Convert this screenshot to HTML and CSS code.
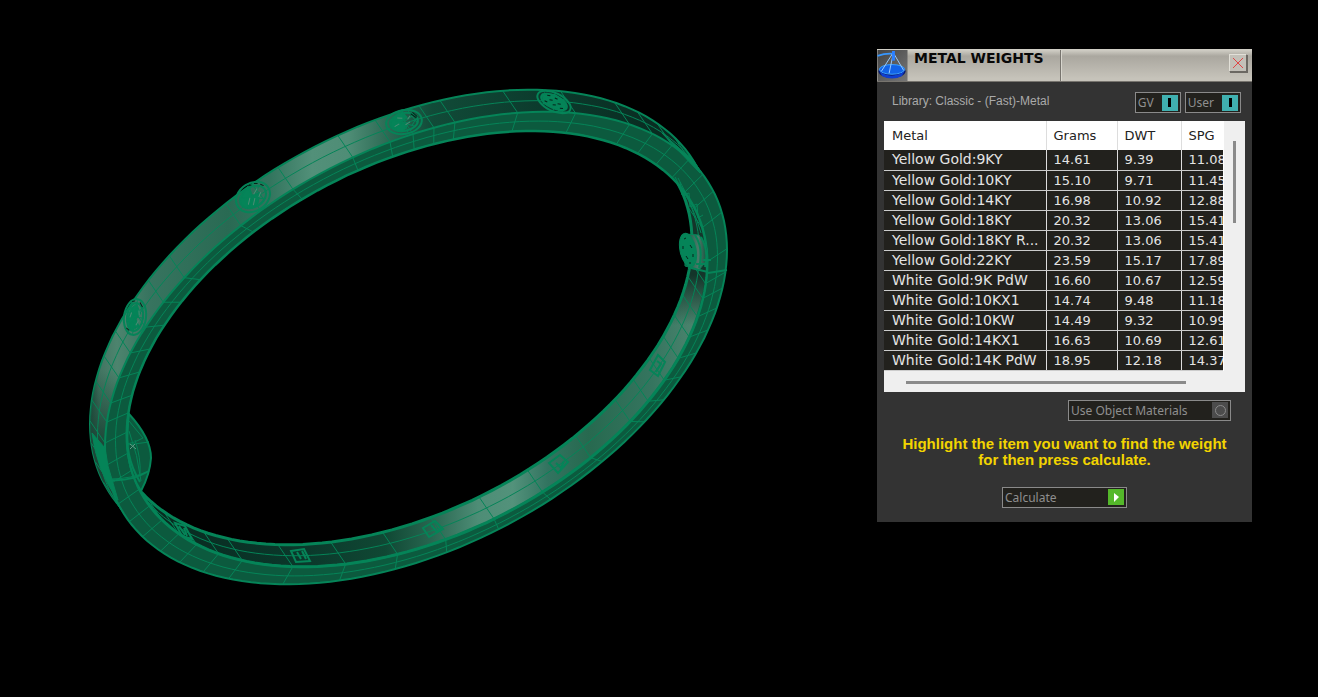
FILE: index.html
```html
<!DOCTYPE html>
<html lang="en">
<head>
<meta charset="utf-8">
<title>Metal Weights</title>
<link rel="stylesheet" href="styles.css">
</head>
<body>
<main class="workspace">
  <svg class="viewport" viewBox="0 0 1318 697" role="img" aria-label="Wireframe bangle">
    <defs>
      <linearGradient id="outer-shade" gradientUnits="userSpaceOnUse" x1="90" y1="0" x2="690" y2="0">
        <stop offset="0" stop-color="#1f4a3b"/>
        <stop offset=".015" stop-color="#427461"/>
        <stop offset=".045" stop-color="#4d846e"/>
        <stop offset=".1" stop-color="#37745f"/>
        <stop offset=".23" stop-color="#296a53"/>
        <stop offset=".3" stop-color="#33755e"/>
        <stop offset=".37" stop-color="#529079"/>
        <stop offset=".43" stop-color="#4f8d76"/>
        <stop offset=".5" stop-color="#2a6852"/>
        <stop offset=".57" stop-color="#114b38"/>
        <stop offset=".75" stop-color="#0c3b2d"/>
        <stop offset="1" stop-color="#08281e"/>
      </linearGradient>
      <linearGradient id="outer-fade" gradientUnits="userSpaceOnUse" x1="0" y1="370" x2="0" y2="445">
        <stop offset="0" stop-color="#1c4637" stop-opacity="0"/>
        <stop offset="1" stop-color="#1c4637"/>
      </linearGradient>
      <linearGradient id="inner-shade" gradientUnits="userSpaceOnUse" x1="130" y1="0" x2="710" y2="0">
        <stop offset="0" stop-color="#08281e"/>
        <stop offset=".3" stop-color="#0b382b"/>
        <stop offset=".44" stop-color="#104834"/>
        <stop offset=".52" stop-color="#286650"/>
        <stop offset=".6" stop-color="#4e8d76"/>
        <stop offset=".66" stop-color="#53927b"/>
        <stop offset=".72" stop-color="#327460"/>
        <stop offset=".79" stop-color="#27694f"/>
        <stop offset=".9" stop-color="#35755f"/>
        <stop offset=".97" stop-color="#4a836d"/>
        <stop offset="1" stop-color="#4a836d"/>
      </linearGradient>
      <linearGradient id="inner-fade" gradientUnits="userSpaceOnUse" x1="0" y1="275" x2="0" y2="325">
        <stop offset="0" stop-color="#14352a"/>
        <stop offset="1" stop-color="#14352a" stop-opacity="0"/>
      </linearGradient>
      <linearGradient id="barrel" x1="0" y1="0" x2="1" y2="0">
        <stop offset="0" stop-color="#0c5a40"/>
        <stop offset=".6" stop-color="#4b7a69"/>
        <stop offset="1" stop-color="#15523d"/>
      </linearGradient>
      <clipPath id="hole"><path id="hole-path"/></clipPath>
    </defs>

    <g class="mesh" id="bangle"></g>

    <g class="mesh hinge">
      <path class="face" d="M129 414Q151 438 151 458Q150 474 141 491Q122 462 129 414Z"/>
      <path d="M129 421l14 17M129 431q9 24 12 50M143 438q-9 5-16 6M149 471q-18 8-38 8M127 445l22-3M135 440q6 18 5 34"/>
      <path class="rim" d="M128 424q-4 32 12 58M110 480q20 2 39-9"/>
      <path class="solid" d="M92 433L105 448 108 466 118 500Q97 472 92 433Z"/>
      <path class="spark" d="M130 444l6 5M135 444l-5 5"/>
    </g>

    <g class="mesh">
      <path class="solid" d="M662 133L676 148 700 173 694 161Z"/>
      <path class="rim" d="M708 273l19-3"/>
      <path class="barrel" d="M685 234l14 1 8 13v12l-8 10-14-4z"/>
      <ellipse class="solid" cx="688" cy="250" rx="8" ry="17" transform="rotate(-12 688 250)"/>
      <path class="pit" d="M684 239l2-1M683 246v3M690 245l2 3M686 256l2 3M693 254v3M689 263h2"/>
      <path class="rim" d="M695 235q9 14 4 33M701 237q8 14 4 30M691 268l17 4M703 260h8M696 264h12"/>
      <path d="M675 177q15 25 17 56M678 178q14 25 23 55M680 182l2 13 7-2 1 14 7-3 1 14 5-3"/>
    </g>

    <g class="mesh">
      <g transform="translate(404 122) rotate(-10)"><g class="gem">
        <ellipse rx="18" ry="12"/><ellipse rx="14" ry="9"/>
        <path class="fill" d="M-14 0Q-10-9 0-10L4-4-3 0 3 4-2 9Q-12 8-14 0Z"/>
        <path d="M-12-5L10 6M-10 5L12-6M0-11L2 11M6-10L13 3M7 5l8-9"/>
        <path class="glint" d="M-10 3l5-2M-6-5l5 1M1 3l5-2M7-5l-3 3"/><path class="pit" d="M8-7l5 5M10-8l4 5"/></g></g>
      <g transform="translate(253 197) rotate(-32)"><g class="gem">
        <ellipse rx="18" ry="14"/><ellipse rx="14" ry="10"/>
        <path class="fill" d="M-14 0Q-8-11 2-9L0-2 8 0 0 9Q-12 10-14 0Z"/>
        <path d="M-12-6L10 8M-10 7L12-7M1-12L-1 13M6-10L8 8"/>
        <path class="glint" d="M-8 4l5-5M-4 7l5-5M2-2l6-3M5 3l4-3"/><path class="pit" d="M2-12l3 1M8-11l3 2M13-7l2 3"/></g></g>
      <g transform="translate(135 317) rotate(8)"><g class="gem">
        <ellipse rx="11" ry="18"/><ellipse rx="8" ry="14"/>
        <path class="fill" d="M0-13L5-4 1 2 5 9-2 14Q-9 4-5-8Z"/>
        <path d="M-6-9L6 10M6-11L-5 11M0-17V17M-8 0H9"/>
        <path class="glint" d="M-5 1l1-5M3-7l1 5M4 3l-2 5"/><path class="pit" d="M-5-15l3-1M3-15l3 4M-4 14l-3-2"/></g></g>
      <g transform="translate(554 102) rotate(26)"><g class="gem">
        <ellipse rx="18" ry="9"/><ellipse rx="14" ry="6"/>
        <path class="fill" d="M-14-2L-2-7 8-6 14 0 9 5-9 6Z"/>
        <path d="M-13-4L12 5M-10 4L10-6M-3-8L3 8M8-7v14"/>
        <path class="pit" d="M-9-3l3-1M-5 0l3-1M-1-4l3 0M0 3l3-1M4 0l3-1M8 3l3-1M-9 3l3 0"/></g></g>
    </g>

    <g class="mesh stamp">
      <path d="M658 355l7 7-7 14-8-6zM657 361l4 3-5 8"/>
      <path d="M549 463l11-8 8 7-10 11zM556 463l5 5 3-7"/>
      <path d="M423 528l12-7 8 8-14 8zM431 525l6 7 5-4"/>
      <path d="M291 551l13-2 6 12-14 1zM297 552l4 7M302 551l4 8"/>
      <path d="M175 523l10 3 7 13-10-3zM179 526l6 9M184 528l3 8"/>
    </g>
  </svg>

  <section class="panel" aria-labelledby="panel-title">
    <header class="titlebar">
      <svg class="logo" viewBox="0 0 31 32" aria-hidden="true">
        <defs><linearGradient id="logo-bg" x1="0" y1="0" x2="1" y2="1"><stop stop-color="#444"/><stop offset="1" stop-color="#777"/></linearGradient></defs>
        <rect width="31" height="32" fill="url(#logo-bg)"/>
        <ellipse cx="15" cy="22" rx="14" ry="7" fill="#081c70"/>
        <ellipse cx="15" cy="20" rx="13" ry="5" fill="#1263e8" stroke="#3fa4ff"/>
        <path d="M2 22q12 9 26 0l-3 5q-10 5-20 0z" fill="#0f3fd0"/>
        <path d="M0 6Q9 3 17 4" fill="none" stroke="#3797ff" stroke-width="2"/>
        <path d="M16 3L4 22M17 4l10 17M16 5l-4 19" fill="none" stroke="#9acbff"/>
        <path d="M15 1h3v10h-3z" fill="#2c80ff"/>
      </svg>
      <h1 class="title" id="panel-title">METAL WEIGHTS</h1>
      <button class="close" type="button" aria-label="Close">
        <svg viewBox="0 0 12 12" aria-hidden="true"><path d="M1 1l10 10M11 1L1 11"/></svg>
      </button>
    </header>

    <div class="library">
      <p class="library-name">Library: Classic - (Fast)-Metal</p>
      <label class="toggle"><span>GV</span><input type="checkbox" checked></label>
      <label class="toggle"><span>User</span><input type="checkbox" checked></label>
    </div>

    <div class="list">
      <div class="list-view">
        <table class="weights">
          <colgroup><col class="col-metal"><col class="col-grams"><col class="col-dwt"><col class="col-spg"></colgroup>
          <thead><tr><th>Metal</th><th>Grams</th><th>DWT</th><th>SPG</th></tr></thead>
          <tbody>
            <tr><td>Yellow Gold:9KY</td><td>14.61</td><td>9.39</td><td>11.08</td></tr>
            <tr><td>Yellow Gold:10KY</td><td>15.10</td><td>9.71</td><td>11.45</td></tr>
            <tr><td>Yellow Gold:14KY</td><td>16.98</td><td>10.92</td><td>12.88</td></tr>
            <tr><td>Yellow Gold:18KY</td><td>20.32</td><td>13.06</td><td>15.41</td></tr>
            <tr><td>Yellow Gold:18KY R...</td><td>20.32</td><td>13.06</td><td>15.41</td></tr>
            <tr><td>Yellow Gold:22KY</td><td>23.59</td><td>15.17</td><td>17.89</td></tr>
            <tr><td>White Gold:9K PdW</td><td>16.60</td><td>10.67</td><td>12.59</td></tr>
            <tr><td>White Gold:10KX1</td><td>14.74</td><td>9.48</td><td>11.18</td></tr>
            <tr><td>White Gold:10KW</td><td>14.49</td><td>9.32</td><td>10.99</td></tr>
            <tr><td>White Gold:14KX1</td><td>16.63</td><td>10.69</td><td>12.61</td></tr>
            <tr><td>White Gold:14K PdW</td><td>18.95</td><td>12.18</td><td>14.37</td></tr>
          </tbody>
        </table>
      </div>
      <div class="scroll-y"><div class="thumb"></div></div>
      <div class="scroll-x"><div class="thumb"></div></div>
    </div>

    <label class="toggle materials"><span>Use Object Materials</span><input type="checkbox"></label>
    <p class="hint">Highlight the item you want to find the weight for then press calculate.</p>
    <button class="calculate" type="button">
      <span>Calculate</span>
      <svg viewBox="0 0 16 16" aria-hidden="true"><path d="M6 4l5 4-5 5z"/></svg>
    </button>
  </section>
</main>
<script src="bangle.js"></script>
</body>
</html>
```
FILE: styles.css
```css
* { box-sizing: border-box; }
body { margin: 0; background: #000; }
h1, p { margin: 0; }
button { cursor: pointer; }

.workspace { position: relative; min-height: 100vh; }
.viewport { display: block; width: 100%; height: auto; }

.mesh path, .mesh ellipse { fill: none; stroke: #058458; stroke-width: 1; }
.mesh .rim { stroke-width: 2; }
.mesh .face { fill: #0c5a3e; stroke-width: 2; }
.mesh .solid { fill: #058458; }
.mesh .outer { fill: url(#outer-shade); stroke-width: 2; }
.mesh .outer-fade { fill: url(#outer-fade); stroke: none; }
.mesh .inner { fill: url(#inner-shade); stroke-width: 3; }
.mesh .inner-fade { fill: url(#inner-fade); stroke: none; }
.mesh .void { fill: #000; stroke-width: 3; }
.mesh .barrel { fill: url(#barrel); }
.mesh .spark { stroke: #5e9a83; }
.gem ellipse { stroke-width: 2; }
.mesh .gem .fill { fill: #058458; }
.mesh .gem .glint { stroke: #4b8c74; }
.mesh .pit { stroke: #06251a; }
.stamp path { stroke-width: 2; }

.panel {
  position: absolute;
  top: 49px;
  right: 66px;
  width: 375px;
  padding-bottom: 14px;
  display: flex;
  flex-direction: column;
  background: #333;
}

.titlebar {
  display: flex;
  height: 33px;
  background: linear-gradient(#d0cec5, #aaa79f 20%, #c6c3ba 92%);
  border-top: 1px solid #d0cec5;
  border-bottom: 1px solid #77746e;
}
.logo { width: 31px; height: 31px; }
.title {
  width: 153px;
  padding-left: 6px;
  border-right: 1px solid #77746e;
  box-shadow: 1px 0 #d8d6ce;
  font: bold 14px/16px "DejaVu Sans", sans-serif;
  color: #080808;
  white-space: nowrap;
}
.close {
  width: 18px;
  height: 18px;
  margin: 4px 5px 0 auto;
  padding: 2px;
  background: #c3c0b8;
  border: 1px solid;
  border-color: #e2e0d8 #6b6862 #6b6862 #e2e0d8;
  box-shadow: 1px 1px #6b6862;
}
.close svg { display: block; }
.close path { stroke: #e04545; }

.library {
  display: flex;
  gap: 4px;
  padding: 10px 11px 8px 15px;
}
.library-name {
  flex: 1;
  font: 12px/18px "Liberation Sans", Arial, sans-serif;
  color: #aaa;
}

.toggle, .calculate {
  display: flex;
  align-items: center;
  justify-content: space-between;
  gap: 8px;
  height: 21px;
  padding: 0 2px;
  background: #22211d;
  border: 1px solid #8a8a8a;
  font: 12px/17px "Noto Sans", sans-serif;
  color: #8f8f8f;
  white-space: nowrap;
}
.toggle input {
  appearance: none;
  display: grid;
  place-items: center;
  width: 16px;
  height: 16px;
  margin: 0;
  background: #4c4c4c;
}
.toggle input::before {
  content: "";
  width: 9px;
  height: 9px;
  border: 1px solid #8a8a8a;
  border-radius: 50%;
}
.toggle input:checked { background: #40b0b0; }
.toggle input:checked::before { width: 3px; border: 0; border-radius: 0; background: #000; }

.list {
  display: grid;
  grid-template: auto 21px / 1fr 21px;
  margin: 0 7px;
  background: #efefef;
}
.list-view { overflow: hidden; border-right: 1px solid #fff; }
.weights {
  width: 365px;
  table-layout: fixed;
  border-collapse: collapse;
  font: 13px/19px "DejaVu Sans", sans-serif;
}
.col-metal { width: 162px; }
.col-grams { width: 71px; }
.col-dwt { width: 64px; }
.weights th, .weights td { padding: 0 0 0 8px; text-align: left; font-weight: normal; white-space: nowrap; }
.weights th + th, .weights td + td { padding-left: 7px; }
.weights th { height: 29px; background: #fff; color: #222; border-right: 1px solid #ddd; }
.weights td { height: 20px; background: #22211d; color: #e4e4e4; border-right: 1px solid #ddd; border-bottom: 1px solid #ccc; }
.weights td:first-child { font-size: 14px; }
.scroll-y { padding: 20px 9px 0; }
.scroll-y .thumb { width: 3px; height: 82px; background: #8a8a8a; }
.scroll-x { padding: 10px 38px 0 22px; }
.scroll-x .thumb { height: 3px; background: #8a8a8a; }

.materials { align-self: flex-end; width: 163px; margin: 8px 21px 0; }
.hint {
  width: 340px;
  margin: 15px auto 0;
  font: bold 15px/16px "Liberation Sans", Arial, sans-serif;
  color: #f2d400;
  text-align: center;
}
.calculate { align-self: center; width: 125px; margin-top: 19px; }
.calculate svg { width: 16px; height: 16px; background: #54b82a; }
.calculate path { fill: #fff; }
```
FILE: bangle.js
```js
const NS = "http://www.w3.org/2000/svg";
const group = document.getElementById("bangle");

// Each rim: centre, half width, shear of the long axis, half depth.
const front = { cx: 416, cy: 348, a: 311, k: -98, b: 215 };
const bore = { cx: 417, cy: 349, a: 290, k: -86, b: 200 };
const depth = { x: -15, y: -22 };

function point(rim, t, shift = 0) {
  return [
    rim.cx + rim.a * Math.cos(t) + depth.x * shift,
    rim.cy + rim.k * Math.cos(t) + rim.b * Math.sin(t) + depth.y * shift
  ];
}
function ring(rim, shift = 0) {
  const pts = [];
  for (let i = 0; i < 180; i++) pts.push(point(rim, i * Math.PI / 90, shift).map(n => n.toFixed(1)).join(" "));
  return "M" + pts.join("L") + "Z";
}
function angleOf(x, y) {
  const u = (x - front.cx) / front.a;
  return Math.atan2((y - front.cy - front.k * u) / front.b, u);
}
function draw(d, cls, clipped) {
  const path = document.createElementNS(NS, "path");
  path.setAttribute("d", d);
  if (cls) path.setAttribute("class", cls);
  if (clipped) path.setAttribute("clip-path", "url(#hole)");
  group.append(path);
}
function rungs(from, to) {
  return stations.map(t => "M" + from(t).join(" ") + "L" + to(t).join(" ")).join("");
}

const stations = [
  [118, 378], [129, 353], [143, 327], [162, 302], [182, 277], [240, 225], [292, 188], [352, 155],
  [390, 142], [413, 134], [434, 127], [455, 122], [518, 112], [575, 114], [627, 127], [650, 136],
  [670, 147], [688, 160], [702, 175], [712, 192], [720, 213], [726, 249], [726, 272], [723, 288],
  [717, 308], [708, 330], [696, 353], [683, 377], [665, 400], [645, 422], [603, 462], [552, 501],
  [499, 530], [447, 554], [395, 571], [339, 582], [283, 584], [230, 577], [205, 570], [180, 562],
  [162, 550], [145, 535], [132, 520], [120, 503], [112, 483], [107, 465], [105, 443], [107, 422], [111, 403]
].map(([x, y]) => angleOf(x, y));

const middle = { cx: 416.5, cy: 348.5, a: 301, k: -92, b: 208 };
document.getElementById("hole-path").setAttribute("d", ring(bore));

draw(ring(front, 1), "outer");
draw(ring(front, 1), "outer-fade");
draw(ring(front, 0.5));
draw(rungs(t => point(front, t), t => point(front, t, 1)));
draw(ring(front), "face");
draw(ring(middle));
draw(rungs(t => point(front, t), t => point(bore, t)));
draw(ring(bore), "inner");
draw(ring(bore), "inner-fade");
draw(ring(bore, 0.5), "", true);
draw(rungs(t => point(bore, t), t => point(bore, t, 1)), "", true);
draw(ring(bore, 1), "void", true);
draw(ring(bore), "rim");
```
